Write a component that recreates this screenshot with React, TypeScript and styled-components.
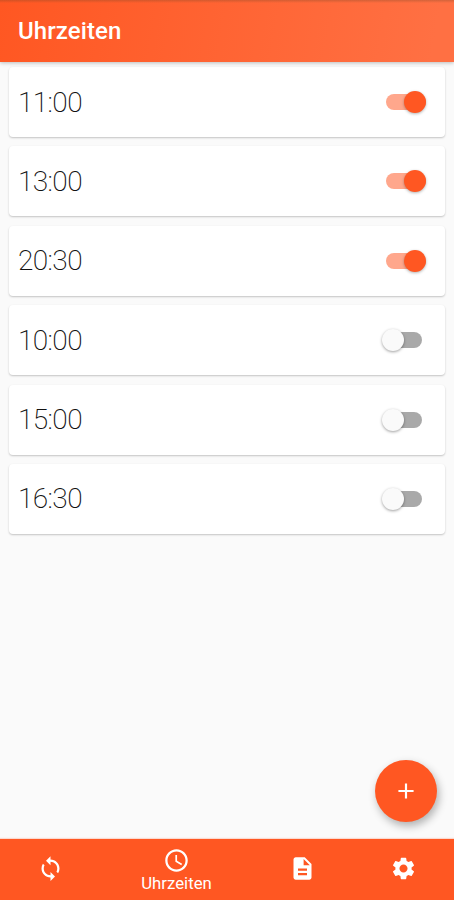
import React from "react";
import styled, { createGlobalStyle } from "styled-components";
import { MdSync, MdAccessTime, MdDescription, MdSettings, MdAdd } from "react-icons/md";

const GlobalStyle = createGlobalStyle`
  *, *::before, *::after { box-sizing: border-box; }
  body { margin: 0; background: #fafafa; font-family: Roboto, sans-serif; }
  button { font: inherit; border: 0; padding: 0; cursor: pointer; }
`;

const Screen = styled.div`
  display: flex;
  flex-direction: column;
  height: 100vh;
  overflow: hidden;
  background: #fafafa;
`;

const Header = styled.header`
  flex: none;
  height: 62px;
  padding: 0 18px;
  display: flex;
  align-items: center;
  z-index: 1;
  color: #fff;
  background: linear-gradient(to bottom, rgba(110, 70, 40, 0.3), transparent 3px),
    linear-gradient(100deg, #ff5722, #ff7043 95%);
  box-shadow: 0 1px 4px rgba(0, 0, 0, 0.25);
`;

const Title = styled.h1`
  margin: 0;
  font-size: 24px;
  line-height: 28px;
  font-weight: 500;
  letter-spacing: 0.1px;
`;

const TimeList = styled.main`
  flex: 1;
  display: flex;
  flex-direction: column;
  gap: 9.4px;
  padding: 5px 9px 0;
`;

const TimeCard = styled.article`
  flex: none;
  height: 70px;
  padding: 0 18px 0 9px;
  display: flex;
  align-items: center;
  justify-content: space-between;
  background: #fff;
  border-radius: 4px;
  box-shadow: 0 1px 2px rgba(0, 0, 0, 0.22);
`;

const Time = styled.span`
  padding-top: 1px;
  font-size: 28px;
  line-height: 32px;
  font-weight: 200;
  letter-spacing: -0.6px;
  color: #111;
`;

const Switch = styled.button<{ $on: boolean }>`
  width: 46px;
  height: 24px;
  padding: ${({ $on }) => ($on ? "0 1px 0 5px" : "0 5px 0 1px")};
  display: flex;
  align-items: center;
  background: none;
`;

const Track = styled.span<{ $on: boolean }>`
  width: 40px;
  height: 16px;
  display: flex;
  align-items: center;
  justify-content: ${({ $on }) => ($on ? "flex-end" : "flex-start")};
  border-radius: 8px;
  background: ${({ $on }) =>
    $on
      ? "#ffa78c"
      : "linear-gradient(to right, transparent 10px, #a9a9a9 10px)"};
`;

const Thumb = styled.span<{ $on: boolean }>`
  flex: none;
  width: 22px;
  height: 22px;
  border-radius: 50%;
  background: ${({ $on }) => ($on ? "#ff5722" : "#fafafa")};
  box-shadow: 0 1px 3px rgba(0, 0, 0, ${({ $on }) => ($on ? 0.3 : 0.38)});
`;

const AddButton = styled.button`
  position: fixed;
  right: 17.5px;
  bottom: 78px;
  width: 62px;
  height: 62px;
  display: flex;
  align-items: center;
  justify-content: center;
  border-radius: 50%;
  color: #fff;
  font-size: 26px;
  background: #ff5722;
  box-shadow: 2px 4px 8px rgba(0, 0, 0, 0.3);
`;

const BottomNav = styled.nav`
  flex: none;
  height: 61px;
  display: grid;
  grid-template-columns: 101px 151px 101px 101px;
  background: #ff5722;
  box-shadow: 0 -1px 1px rgba(255, 87, 34, 0.2);
`;

const NavItem = styled.button<{ $active: boolean }>`
  display: flex;
  flex-direction: column;
  align-items: center;
  justify-content: ${({ $active }) => ($active ? "flex-start" : "center")};
  padding-top: ${({ $active }) => ($active ? "8px" : "0")};
  padding-bottom: ${({ $active }) => ($active ? "0" : "3px")};
  color: #fff;
  background: none;
  font-size: 27px;
`;

const NavLabel = styled.span`
  font-size: 16.8px;
  line-height: 19px;
`;

const times = [
  { time: "11:00", on: true },
  { time: "13:00", on: true },
  { time: "20:30", on: true },
  { time: "10:00", on: false },
  { time: "15:00", on: false },
  { time: "16:30", on: false },
];

const tabs = [
  { id: "sync", icon: <MdSync />, label: "" },
  { id: "times", icon: <MdAccessTime />, label: "Uhrzeiten" },
  { id: "notes", icon: <MdDescription />, label: "" },
  { id: "settings", icon: <MdSettings />, label: "" },
];

export default function App() {
  return (
    <Screen>
      <GlobalStyle />
      <Header>
        <Title>Uhrzeiten</Title>
      </Header>
      <TimeList>
        {times.map(({ time, on }) => (
          <TimeCard key={time}>
            <Time>{time}</Time>
            <Switch $on={on} role="switch" aria-checked={on}>
              <Track $on={on}>
                <Thumb $on={on} />
              </Track>
            </Switch>
          </TimeCard>
        ))}
      </TimeList>
      <AddButton>
        <MdAdd />
      </AddButton>
      <BottomNav>
        {tabs.map(({ id, icon, label }) => (
          <NavItem key={id} $active={label !== ""}>
            {icon}
            {label && <NavLabel>{label}</NavLabel>}
          </NavItem>
        ))}
      </BottomNav>
    </Screen>
  );
}
